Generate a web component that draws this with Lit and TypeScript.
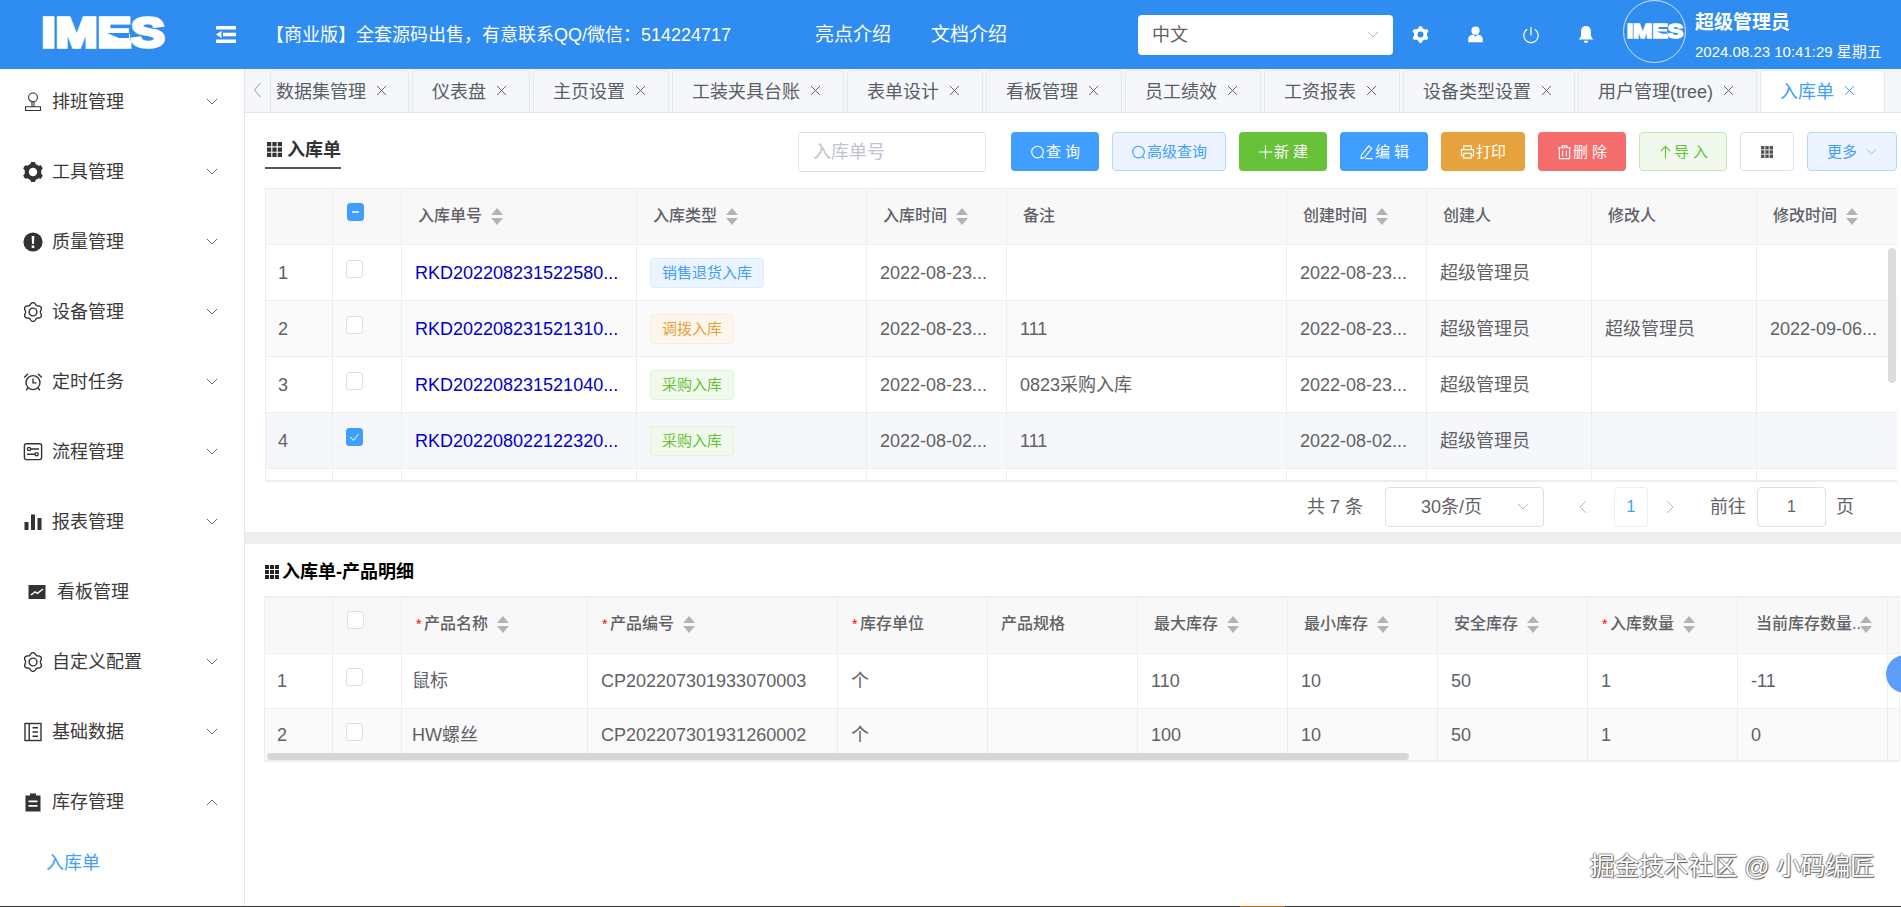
import { LitElement, html, css, svg } from "lit";
import { customElement } from "lit/decorators.js";

const NOTICE = "【商业版】全套源码出售\uFF0C有意联系QQ/微信\uFF1A514224717";

const radial = (R: number, a: number, n: number, rot = 0) => {
  const pts: string[] = [];
  for (let i = 0; i < 120; i++) {
    const t = (i / 120) * Math.PI * 2;
    const r = R + a * Math.cos(n * t + rot);
    pts.push(`${(10 + r * Math.cos(t)).toFixed(2)} ${(10 + r * Math.sin(t)).toFixed(2)}`);
  }
  return "M" + pts.join("L") + "Z";
};
const toothed = (R: number, r: number, n: number) => {
  const pts: string[] = [];
  for (let i = 0; i < n; i++) {
    const base = (i / n) * Math.PI * 2 - Math.PI / 2;
    const s = (Math.PI * 2) / n;
    for (const [d, q] of [[-0.3, r], [-0.17, R], [0.17, R], [0.3, r]] as number[][]) {
      pts.push(`${(10 + q * Math.cos(base + d * s)).toFixed(2)} ${(10 + q * Math.sin(base + d * s)).toFixed(2)}`);
    }
  }
  return "M" + pts.join("L") + "Z";
};
const circlePath = (r: number) => `M${10 - r} 10a${r} ${r} 0 1 0 ${2 * r} 0a${r} ${r} 0 1 0 ${-2 * r} 0Z`;

const ic = (content: unknown, size = 20) =>
  html`<svg class="ic" width=${size} height=${size} viewBox="0 0 20 20">${content}</svg>`;

const icons: Record<string, unknown> = {
  stamp: svg`<g fill="none" stroke="#333" stroke-width="1.100"><circle cx="10" cy="5.400" r="4.400"/><path d="M9 9.800v5M11 9.800v5M2.500 14.800h15v3.700h-15z"/></g>`,
  gearSolid: svg`<path fill="#333" fill-rule="evenodd" d="${toothed(10.4, 8.4, 6)} ${circlePath(4.200)}"/>`,
  warn: svg`<circle cx="10" cy="10" r="9.600" fill="#333"/><path fill="#fff" d="M8.600 4h2.800l-.5 8H9.100zM8.700 13.400h2.600V16H8.700z"/>`,
  gearLine: svg`<path fill="none" stroke="#333" stroke-width="1.400" d="${radial(8.400, 1, 6, Math.PI)}"/><circle cx="10" cy="10" r="3.900" fill="none" stroke="#333" stroke-width="1.400"/>`,
  alarm: svg`<g fill="none" stroke="#333" stroke-width="1.400"><circle cx="10" cy="10.600" r="7"/><path d="M10 6.500v4.400h3.600M1.200 5.400 5 1.800M18.800 5.400 15 1.800M4.800 16l-1.600 2.400M15.200 16l1.600 2.400"/></g>`,
  flow: svg`<g fill="none" stroke="#333" stroke-width="1.400"><rect x="1.400" y="1.800" width="17.200" height="15.800" rx="2"/><circle cx="6" cy="7" r="1.600"/><circle cx="13.600" cy="12.200" r="1.600"/><path d="M7.600 7H16M4 12.200h8"/></g>`,
  bars: svg`<path fill="#333" d="M1.500 10h4v8h-4zM8 2.500h4V18H8zM14.500 6h4v12h-4z"/>`,
  board: svg`<path fill="#333" d="M1.500 3h17v14h-17z"/><path fill="none" stroke="#fff" stroke-width="1.500" d="m4 13 4-3.200 2.500 1.500L16 7"/>`,
  book: svg`<g fill="none" stroke="#333" stroke-width="1.400"><rect x="2" y="1.500" width="16" height="17"/><path d="M6.200 1.500v17M9.500 5.800h5.500M9.500 10h5.500M9.500 14.200h5.500"/></g>`,
  clip: svg`<path fill="#333" d="M2.500 3.500H7V1.500h6v2h4.500v16h-15z"/><path fill="#fff" d="M5.500 8.500h9v1.800h-9zM5.500 13h9v1.800h-9z"/>`,
};

const chevron = (up = false, color = "#666", w = 12) =>
  html`<svg class="ic" width=${w} height="8" viewBox="0 0 12 8"><path fill="none" stroke=${color} stroke-width="1" d=${up ? "M1 7 6 2l5 5" : "M1 1l5 5 5-5"}/></svg>`;

const tinyGrid = (color: string, size: number) => html`<svg class="ic" width=${size} height=${size} viewBox="0 0 12 12"><path fill=${color} d="M0 0h3.400v3.400H0zM4.300 0h3.400v3.400H4.300zM8.600 0H12v3.400H8.600zM0 4.300h3.400v3.400H0zM4.300 4.300h3.400v3.400H4.300zM8.600 4.300H12v3.400H8.600zM0 8.600h3.400V12H0zM4.300 8.600h3.400V12H4.300zM8.600 8.600H12V12H8.600z"/></svg>`;

const btnIcons: Record<string, unknown> = {
  search: svg`<circle cx="8" cy="8" r="6.200" fill="none" stroke="currentColor" stroke-width="1.200"/><path d="m12.300 12.500 2.200 2.400" stroke="currentColor" stroke-width="1.200"/>`,
  plus: svg`<path d="M8 1v14M1 8h14" stroke="currentColor" stroke-width="1.200"/>`,
  edit: svg`<path fill="none" stroke="currentColor" stroke-width="1.200" d="M10.500 1.500 13.500 4 6 14l-3.800 1 .5-3.800zM7 15h7.500"/>`,
  print: svg`<g fill="none" stroke="currentColor" stroke-width="1.200"><path d="M4 5V1.500h8V5M4 12H1.500V5.500h13V12H12"/><path d="M4 9.500h8v5H4z"/></g>`,
  trash: svg`<g fill="none" stroke="currentColor" stroke-width="1.200"><path d="M1 3.500h14M5.500 3.500V1.500h5v2M2.500 3.500v11.500h11V3.500M6 6.500v6M10 6.500v6"/></g>`,
  up: svg`<path fill="none" stroke="currentColor" stroke-width="1.200" d="M8 15V2M3 7l5-5 5 5"/>`,
};
const bi = (name: string) => html`<svg class="ic" width="15" height="16" viewBox="0 0 16 16">${btnIcons[name]}</svg>`;

const sideItems = [
  ["stamp", "排班管理"], ["gearSolid", "工具管理"], ["warn", "质量管理"], ["gearLine", "设备管理"],
  ["alarm", "定时任务"], ["flow", "流程管理"], ["bars", "报表管理"],
];
const sideItems2 = [["gearLine", "自定义配置"], ["book", "基础数据"]];

const tabs = ["仪表盘", "主页设置", "工装夹具台账", "表单设计", "看板管理", "员工绩效", "工资报表", "设备类型设置", "用户管理(tree)"];

const cols1 = [67, 69, 235, 230, 140, 280, 140, 165, 165, 141];
const cols2 = [68, 69, 186, 250, 150, 150, 150, 150, 150, 150, 150, 13];

const rows1 = [
  { n: 1, id: "RKD202208231522580...", tag: "销售退货入库", kind: "blue", t: "2022-08-23...", note: "", c: "2022-08-23...", by: "超级管理员", mby: "", m: "" },
  { n: 2, id: "RKD202208231521310...", tag: "调拨入库", kind: "orange", t: "2022-08-23...", note: "111", c: "2022-08-23...", by: "超级管理员", mby: "超级管理员", m: "2022-09-06..." },
  { n: 3, id: "RKD202208231521040...", tag: "采购入库", kind: "green", t: "2022-08-23...", note: "0823采购入库", c: "2022-08-23...", by: "超级管理员", mby: "", m: "" },
  { n: 4, id: "RKD202208022122320...", tag: "采购入库", kind: "green", t: "2022-08-02...", note: "111", c: "2022-08-02...", by: "超级管理员", mby: "", m: "", sel: true },
];
const rows2 = [
  ["1", "鼠标", "CP202207301933070003", "个", "", "110", "10", "50", "1", "-11"],
  ["2", "HW螺丝", "CP202207301931260002", "个", "", "100", "10", "50", "1", "0"],
];

const sort = html`<span class="sort"><i class="up"></i><i class="down"></i></span>`;
const closeX = html`<svg class="ic x" width="11" height="11" viewBox="0 0 11 11"><path d="m1 1 9 9M10 1l-9 9" stroke="currentColor" stroke-width="1" fill="none"/></svg>`;

@customElement("logo-text")
class LogoText extends LitElement {
  static properties = { w: { type: Number }, h: { type: Number } };
  w = 126;
  h = 54;
  static styles = css`
    :host { display: block; line-height: 0; }
    text { font-family: "Liberation Sans", sans-serif; font-weight: 700; fill: #fff; stroke: #fff; stroke-width: 3.500px; }
  `;
  render() {
    return html`<svg width=${this.w} height=${this.h} viewBox="0 0 126 54"><text x="1.500" y="41" font-size="42" textLength="123" lengthAdjust="spacingAndGlyphs">IMES</text><path fill="#fff" d="M65 28h25v8H65z"/><path fill="#2f8df1" d="M67 27h22v5H79z"/></svg>`;
  }
}

@customElement("app-root")
export class AppRoot extends LitElement {
  static styles = css`
    :host { display: block; width: 1901px; height: 907px; overflow: hidden; position: relative; background: #fff; color: #606266;
      font-family: "Liberation Sans", "Noto Sans CJK SC", sans-serif; font-size: 18px; line-height: 24px; }
    .ic { display: block; flex: none; }
    .top { height: 69px; background: #2f8df1; color: #fff; display: flex; align-items: center; }
    .logo { margin-left: 40px; margin-top: -4px; }
    .burger { margin-left: 50px; }
    .notice { margin-left: 30px; width: 549px; white-space: nowrap; font-size: 18px; }
    .nav { width: 116px; font-size: 19px; white-space: nowrap; }
    .lang { margin-left: 91px; width: 255px; height: 40px; box-sizing: border-box; background: #fff; border-radius: 4px; color: #606266; display: flex; align-items: center; justify-content: space-between; padding: 0 14px; font-size: 18px; }
    .ticon { width: 55px; display: flex; justify-content: center; }
    .avatar { margin-left: 10px; width: 63px; height: 63px; box-sizing: border-box; border: 1px solid #cfe4fb; border-radius: 50%; align-self: flex-start; display: flex; align-items: center; justify-content: center; }
    .who { margin-left: 9px; display: flex; flex-direction: column; gap: 9px; white-space: nowrap; margin-top: 2px; }
    .who b { font-size: 19px; line-height: 24px; }
    .who span { font-size: 15px; line-height: 16px; }

    .body { display: flex; height: 837px; }
    .side { width: 245px; box-sizing: border-box; border-right: 1px solid #e6e6e6; display: flex; flex-direction: column; gap: 5px; color: #3a3a3a; flex: none; }
    .mi { height: 65px; display: flex; align-items: center; padding: 0 26px 0 23px; }
    .mi .txt { margin-left: 9px; }
    .mi .chev { margin-left: auto; }
    .mi.plain { padding-left: 27px; }
    .mi.plain .txt { margin-left: 10px; }
    .sub { height: 47px; display: flex; align-items: center; padding-left: 46px; color: #409eff; }

    .main { flex: 1; min-width: 0; display: flex; flex-direction: column; }
    .tabs { height: 44px; box-sizing: border-box; background: #f5f7fa; border-bottom: 1px solid #dfe4ed; display: flex; align-items: flex-end; gap: 3px; padding-left: 25px; position: relative; overflow: hidden; }
    .arrow { position: absolute; left: 8px; top: 13px; }
    .tab { height: 43px; box-sizing: border-box; display: flex; align-items: center; padding: 0 22px 0 19px; border: 1px solid #e4e7ed; border-bottom: 0; border-radius: 5px 5px 0 0; white-space: nowrap; background: #f5f7fa; margin-bottom: -1px; color: #5a5e66; }
    .tab.first { padding-left: 5px; padding-right: 21px; }
    .tab .x { margin-left: 10px; margin-top: -4px; color: #666; }
    .tab.on { background: #fff; color: #409eff; padding-right: 29px; }
    .tab.on .x { color: #409eff; }

    .tool { height: 75px; box-sizing: border-box; padding: 19px 4px 0 20px; display: flex; align-items: flex-start; gap: 13px; }
    .title { height: 37px; width: 76px; box-sizing: border-box; border-bottom: 2px solid #555; display: flex; align-items: center; gap: 5px; padding-left: 2px; font-weight: 700; color: #333; white-space: nowrap; }
    .search { margin-left: auto; margin-right: 12px; width: 188px; height: 40px; box-sizing: border-box; border: 1px solid #dcdfe6; border-radius: 4px; color: #c0c4cc; padding-left: 14px; display: flex; align-items: center; }
    .btn { width: 88px; height: 39px; box-sizing: border-box; border-radius: 4px; border: 1px solid transparent; display: flex; align-items: center; justify-content: center; gap: 1px; font-size: 15px; color: #fff; white-space: pre; }
    .primary { background: #409eff; }
    .plainb { background: #ecf5ff; border-color: #b3d8ff; color: #409eff; }
    .success { background: #67c23a; }
    .warning { background: #e6a23c; }
    .danger { background: #f56c6c; }
    .plaing { background: #f0f9eb; border-color: #c2e7b0; color: #67c23a; }
    .whiteb { background: #fff; border-color: #dcdfe6; }
    .w84 { width: 84px; }
    .w114 { width: 114px; }
    .w54 { width: 54px; }
    .more { width: 90px; gap: 9px; }

    .tw1 { margin: 0 4px 0 20px; height: 294px; box-sizing: border-box; border-left: 1px solid #ebeef5; border-top: 1px solid #ebeef5; border-bottom: 2px solid #ebeef5; overflow: hidden; position: relative; }
    .tw2 { margin: 0 1px 0 19px; height: 166px; box-sizing: border-box; border: 1px solid #ebeef5; border-bottom-width: 2px; border-top-width: 2px; overflow: hidden; position: relative; }
    table { border-collapse: separate; border-spacing: 0; table-layout: fixed; }
    th { height: 56px; box-sizing: border-box; background: #f8f8f9; font-weight: 500; font-size: 16px; color: #606266; text-align: left; padding: 0 0 1px 16px; border-right: 1px solid #ebeef5; border-bottom: 1px solid #ebeef5; white-space: nowrap; overflow: hidden; }
    td { box-sizing: border-box; padding: 0 0 0 13px; border-right: 1px solid #ebeef5; border-bottom: 1px solid #ebeef5; white-space: nowrap; overflow: hidden; font-size: 18px; }
    td:first-child { padding-left: 12px; }
    .tw1 td { height: 56px; }
    .tw2 td { height: 54.500px; }
    .tw2 td:nth-child(3) { padding-left: 10px; }
    .tw2 th:nth-child(6) { padding-left: 13px; }
    .tw2 th { height: 56px; padding-bottom: 3px; }
    th.cbc { padding-left: 14px; }
    .thin { display: flex; align-items: center; gap: 9px; }
    .thin.last { gap: 0; }
    .thin.last span:first-child { width: 104px; }
    th.lastc { padding-left: 18px; }
    .star { color: #f00; font-size: 14px; width: 8px; margin-right: -9px; margin-left: -2px; }
    .sort { display: flex; flex-direction: column; gap: 3px; flex: none; }
    .sort i { display: block; width: 0; height: 0; border-left: 6px solid transparent; border-right: 6px solid transparent; }
    .sort .up { border-bottom: 7px solid #b4b4b4; }
    .sort .down { border-top: 7px solid #b4b4b4; }
    tr.s td { background: #fafafa; }
    tr.h td { background: #f5f7fa; }
    a.link { color: #0000cd; }
    .tag { display: inline-flex; align-items: center; height: 30px; box-sizing: border-box; padding: 0 11px; border: 1px solid; border-radius: 4px; font-size: 15px; vertical-align: middle; }
    .blue { background: #ecf5ff; border-color: #d9ecff; color: #409eff; }
    .orange { background: #fdf6ec; border-color: #faecd8; color: #e6a23c; }
    .green { background: #f0f9eb; border-color: #e1f3d8; color: #67c23a; }
    .cb { display: block; width: 17px; height: 18px; box-sizing: border-box; border: 1px solid #dcdfe6; border-radius: 3px; background: #fff; margin-bottom: 7px; }
    th .cb { margin-bottom: 8px; }
    .cb.on { background: #409eff; border-color: #409eff; }
    .cb svg { display: block; }

    .vbar { position: absolute; right: 1px; top: 59px; width: 8px; height: 135px; background: #dcdcdc; border-radius: 4px; }
    .hbar { position: absolute; left: 2px; bottom: 0; width: 1142px; height: 7px; background: #d4d6d8; border-radius: 4px; }

    .pager { height: 50px; display: flex; align-items: center; padding-left: 1062px; white-space: pre; flex: none; }
    .psel { margin-left: 22px; width: 159px; height: 40px; box-sizing: border-box; border: 1px solid #dcdfe6; border-radius: 4px; display: flex; align-items: center; padding: 0 14px 0 35px; justify-content: space-between; }
    .prev { margin-left: 35px; }
    .goto { margin-left: 36px; }
    .pb { width: 34px; height: 40px; box-sizing: border-box; border: 1px solid #ebeef5; border-radius: 4px; color: #409eff; display: flex; align-items: center; justify-content: center; font-size: 16px; margin: 0 18px 0 27px; }
    .pinp { width: 69px; height: 40px; box-sizing: border-box; border: 1px solid #dcdfe6; border-radius: 4px; display: flex; align-items: center; justify-content: center; font-size: 16px; margin: 0 10px 0 11px; }
    .gap { height: 12px; background: #eee; flex: none; }
    .t2 { height: 52px; box-sizing: border-box; padding-top: 3px; flex: none; display: flex; align-items: center; gap: 3px; padding-left: 20px; font-weight: 700; color: #000; }

    .wm { position: absolute; left: 1590px; top: 855px; font-size: 24.600px; white-space: pre; color: #fff; text-shadow: 1px 1px 1px #555, -1px 0 1px #888, 0 -1px 1px #999; }
    .ball { position: absolute; left: 1886px; top: 655px; width: 38px; height: 38px; border-radius: 50%; background: #5b9df9; }
    .foot { position: absolute; left: 0; right: 0; bottom: 0; height: 1px; background: #333; }
    .foot i { position: absolute; left: 1240px; width: 45px; height: 1px; background: #b5651d; }
  `;

  private cb(on: "" | "check" | "minus" = "") {
    return html`<span class="cb ${on ? "on" : ""}">${on === "minus"
      ? html`<svg width="15" height="16" viewBox="0 0 15 16"><path d="M4 8h7" stroke="#fff" stroke-width="1.500"/></svg>`
      : on === "check"
      ? html`<svg width="15" height="16" viewBox="0 0 15 16"><path fill="none" d="m3.500 8 3 3.500 5-6.500" stroke="#fff" stroke-width="1"/></svg>`
      : ""}</span>`;
  }

  private colgroup(cols: number[]) {
    return html`<colgroup>${cols.map((w) => html`<col style="width:${w}px" />`)}</colgroup>`;
  }

  private th(text: string, sortable = true, star = false) {
    return html`<th><div class="thin">${star ? html`<span class="star">*</span>` : ""}<span>${text}</span>${sortable ? sort : ""}</div></th>`;
  }

  render() {
    const total = cols1.reduce((a, b) => a + b, 0);
    const total2 = cols2.reduce((a, b) => a + b, 0);
    return html`
      <div class="top">
        <logo-text class="logo"></logo-text>
        <svg class="ic burger" width="20" height="17" viewBox="0 0 20 17"><path fill="#fff" d="M0 0h20v3.500H0zM0 13.500h20V17H0zM7 6.700h13v3.500H7zM0 8.500l5.500-3.500v7z"/></svg>
        <div class="notice">${NOTICE}</div>
        <div class="nav">亮点介绍</div>
        <div class="nav">文档介绍</div>
        <div class="lang"><span>中文</span>${chevron(false, "#b0b4bb")}</div>
        <div class="ticon">${ic(svg`<path fill="#fff" fill-rule="evenodd" d="${toothed(10, 7.800, 6)} ${circlePath(3.500)}"/>`, 17)}</div>
        <div class="ticon">${ic(svg`<circle cx="10" cy="5.500" r="4.800" fill="#fff"/><path fill="#fff" d="M1.500 19v-4c0-3 3-4.500 6-5l2.500 2.500 2.500-2.500c3 .5 6 2 6 5v4z"/>`, 17)}</div>
        <div class="ticon">${ic(svg`<path fill="none" stroke="#fff" stroke-width="1.400" d="M10 1v9.500M5.800 3.600a8 8 0 1 0 8.400 0"/>`, 18)}</div>
        <div class="ticon">${ic(svg`<path fill="#fff" d="M10 0C6 0 4.500 3 4.500 6.500v4.500L2 15h16l-2.500-4V6.500C15.500 3 14 0 10 0zM7.500 16.500h5a2.500 2.500 0 0 1-5 0z"/>`, 18)}</div>
        <div class="avatar"><logo-text .w=${58} .h=${25}></logo-text></div>
        <div class="who"><b>超级管理员</b><span>2024.08.23 10:41:29 星期五</span></div>
      </div>
      <div class="body">
        <div class="side">
          ${sideItems.map(([i, t]) => html`<div class="mi">${ic(icons[i])}<span class="txt">${t}</span><span class="chev">${chevron()}</span></div>`)}
          <div class="mi plain">${ic(icons.board)}<span class="txt">看板管理</span></div>
          ${sideItems2.map(([i, t]) => html`<div class="mi">${ic(icons[i])}<span class="txt">${t}</span><span class="chev">${chevron()}</span></div>`)}
          <div class="mi">${ic(icons.clip)}<span class="txt">库存管理</span><span class="chev">${chevron(true)}</span></div>
          <div class="sub">入库单</div>
        </div>
        <div class="main">
          <div class="tabs">
            <svg class="ic arrow" width="9" height="16" viewBox="0 0 9 16"><path fill="none" stroke="#999" d="M7.500 1 1.500 8l6 7"/></svg>
            <div class="tab first">数据集管理${closeX}</div>
            ${tabs.map((t) => html`<div class="tab">${t}${closeX}</div>`)}
            <div class="tab on">入库单${closeX}</div>
          </div>
          <div class="tool">
            <div class="title">${tinyGrid("#333", 15)}入库单</div>
            <div class="search">入库单号</div>
            <div class="btn primary">${bi("search")}查 询</div>
            <div class="btn plainb w114">${bi("search")}高级查询</div>
            <div class="btn success">${bi("plus")}新 建</div>
            <div class="btn primary">${bi("edit")}编 辑</div>
            <div class="btn warning w84">${bi("print")}打印</div>
            <div class="btn danger">${bi("trash")}删 除</div>
            <div class="btn plaing">${bi("up")}导 入</div>
            <div class="btn whiteb w54">${tinyGrid("#555", 12)}</div>
            <div class="btn plainb more">更多${chevron(false, "#7fb5f5", 11)}</div>
          </div>
          <div class="tw1">
            <table style="width:${total}px">
              ${this.colgroup(cols1)}
              <tr>
                <th></th><th class="cbc">${this.cb("minus")}</th>
                ${this.th("入库单号")}${this.th("入库类型")}${this.th("入库时间")}${this.th("备注", false)}${this.th("创建时间")}${this.th("创建人", false)}${this.th("修改人", false)}${this.th("修改时间")}
              </tr>
              ${rows1.map((r) => html`<tr class="${r.sel ? "h" : r.n === 2 ? "s" : ""}">
                <td>${r.n}</td><td>${this.cb(r.sel ? "check" : "")}</td>
                <td><a class="link">${r.id}</a></td>
                <td><span class="tag ${r.kind}">${r.tag}</span></td>
                <td>${r.t}</td><td>${r.note}</td><td>${r.c}</td><td>${r.by}</td><td>${r.mby}</td><td>${r.m}</td>
              </tr>`)}
              <tr><td></td><td></td><td></td><td></td><td></td><td></td><td></td><td></td><td></td><td></td></tr>
            </table>
            <div class="vbar"></div>
          </div>
          <div class="pager">
            <span>共 7 条</span>
            <div class="psel"><span>30条/页</span>${chevron(false, "#b0b4bb")}</div>
            <svg class="ic prev" width="8" height="14" viewBox="0 0 8 14"><path fill="none" stroke="#bbb" d="M7 1 1 7l6 6"/></svg>
            <div class="pb">1</div>
            <svg class="ic" width="8" height="14" viewBox="0 0 8 14"><path fill="none" stroke="#bbb" d="m1 1 6 6-6 6"/></svg>
            <span class="goto">前往</span>
            <div class="pinp">1</div>
            <span>页</span>
          </div>
          <div class="gap"></div>
          <div class="t2">${tinyGrid("#222", 14)}入库单-产品明细</div>
          <div class="tw2">
            <table style="width:${total2}px">
              ${this.colgroup(cols2)}
              <tr>
                <th></th><th class="cbc">${this.cb()}</th>
                ${this.th("产品名称", true, true)}${this.th("产品编号", true, true)}${this.th("库存单位", false, true)}${this.th("产品规格", false)}${this.th("最大库存")}${this.th("最小库存")}${this.th("安全库存")}${this.th("入库数量", true, true)}
                <th class="lastc"><div class="thin last"><span>当前库存数量..</span>${sort}</div></th><th></th>
              </tr>
              ${rows2.map((r, i) => html`<tr class="${i === 1 ? "s" : ""}">
                <td>${r[0]}</td><td>${this.cb()}</td>
                ${r.slice(1).map((c) => html`<td>${c}</td>`)}<td></td>
              </tr>`)}
            </table>
            <div class="hbar"></div>
          </div>
        </div>
      </div>
      <div class="ball"></div>
      <div class="wm">掘金技术社区 @ 小码编匠</div>
      <div class="foot"><i></i></div>
    `;
  }
}
void LogoText;
